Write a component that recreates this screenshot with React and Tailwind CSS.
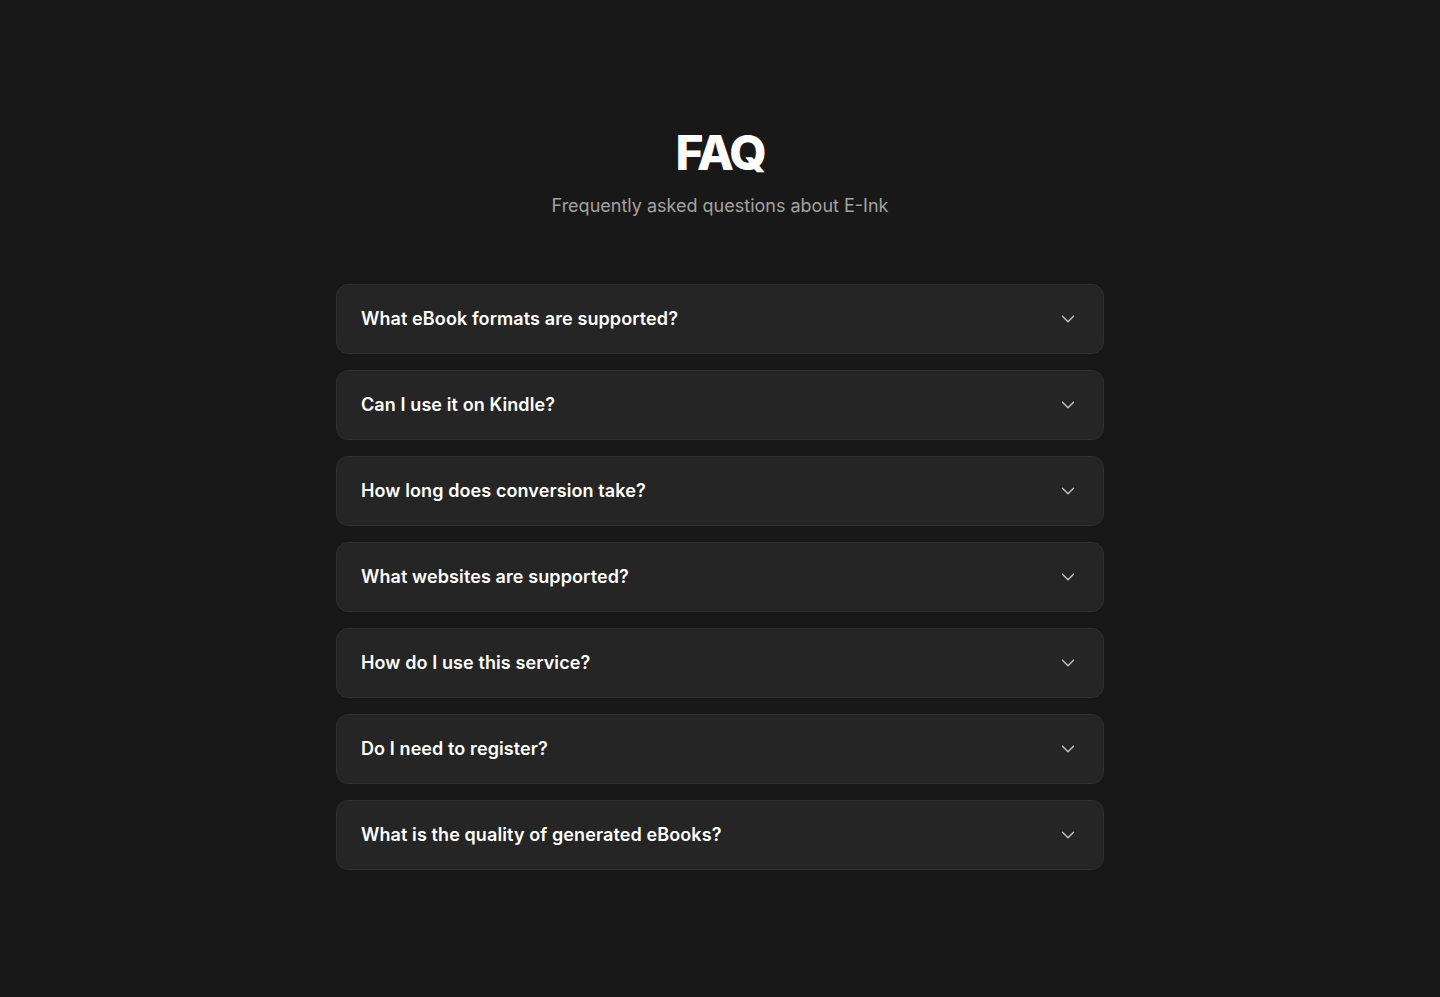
import React, { useState } from 'react';
import { ChevronDown } from 'lucide-react';

const FAQS = [
  { q: 'What eBook formats are supported?', a: 'We support EPUB, MOBI, AZW3 and PDF output formats.' },
  { q: 'Can I use it on Kindle?', a: 'Yes. Download the MOBI or AZW3 file and send it to your Kindle.' },
  { q: 'How long does conversion take?', a: 'Most conversions finish within a minute.' },
  { q: 'What websites are supported?', a: 'Most article and novel websites are supported.' },
  { q: 'How do I use this service?', a: 'Paste a link, choose a format and click convert.' },
  { q: 'Do I need to register?', a: 'No registration is required.' },
  { q: 'What is the quality of generated eBooks?', a: 'Generated eBooks keep headings, images and chapter structure.' },
];

function FaqItem({ item }) {
  const [open, setOpen] = useState(false);
  return (
    <div className="rounded-xl border border-[#2e2e2e] bg-[#252525]">
      <button
        onClick={() => setOpen(!open)}
        className="flex h-[68px] w-full items-center justify-between px-6 text-left"
      >
        <span className="text-lg font-semibold tracking-[0.1px] text-white">{item.q}</span>
        <ChevronDown
          size={22}
          strokeWidth={1.5}
          className={`text-[#c4c4c4] transition-transform ${open ? 'rotate-180' : ''}`}
        />
      </button>
      {open && <p className="px-6 pb-5 text-base text-[#a3a3a3]">{item.a}</p>}
    </div>
  );
}

export default function App() {
  return (
    <div
      className="min-h-screen bg-[#181818] px-4 pt-[129px] pb-24"
      style={{ fontFamily: 'Inter, "Noto Sans", sans-serif' }}
    >
      <div className="mx-auto max-w-3xl">
        <h1 className="text-center text-5xl leading-none font-extrabold tracking-tighter text-white">FAQ</h1>
        <p className="mt-[15px] text-center text-lg text-[#a3a3a3]">Frequently asked questions about E-Ink</p>

        <div className="mt-16 flex flex-col gap-4">
          {FAQS.map((item) => (
            <FaqItem key={item.q} item={item} />
          ))}
        </div>
      </div>
    </div>
  );
}
